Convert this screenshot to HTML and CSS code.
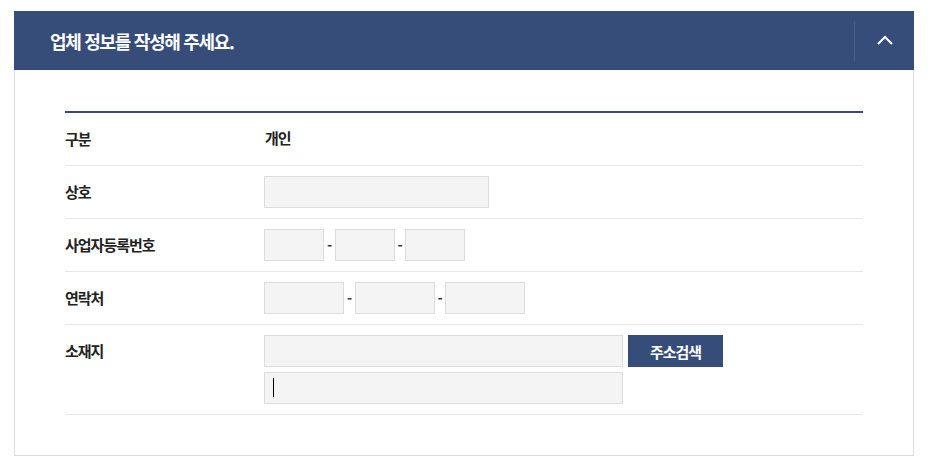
FILE: index.html
```html
<!DOCTYPE html>
<html lang="ko">
<head>
<meta charset="utf-8">
<title>업체 정보</title>
<link rel="stylesheet" href="styles.css">
</head>
<body>
<section class="panel">
  <header class="panel-head">
    <h2 class="panel-title">업체 정보를 작성해 주세요.</h2>
    <button class="toggle" type="button" aria-label="접기">
      <svg width="16" height="10" viewBox="0 0 16 10"><path d="M1 9 L8 2 L15 9" fill="none" stroke="#fff" stroke-width="2"/></svg>
    </button>
  </header>
  <div class="panel-body">
    <div class="form-table">
      <div class="row">
        <div class="label">구분</div>
        <div class="field"><span class="value">개인</span></div>
      </div>
      <div class="row">
        <div class="label">상호</div>
        <div class="field"><input class="inp w225" type="text"></div>
      </div>
      <div class="row">
        <div class="label">사업자등록번호</div>
        <div class="field">
          <input class="inp w60" type="text"><span class="dash">-</span><input class="inp w60" type="text"><span class="dash d10">-</span><input class="inp w60" type="text">
        </div>
      </div>
      <div class="row">
        <div class="label">연락처</div>
        <div class="field">
          <input class="inp w80" type="text"><span class="dash">-</span><input class="inp w80" type="text"><span class="dash d10">-</span><input class="inp w80" type="text">
        </div>
      </div>
      <div class="row">
        <div class="label">소재지</div>
        <div class="field col">
          <div class="line">
            <input class="inp w359" type="text">
            <button class="btn" type="button">주소검색</button>
          </div>
          <div class="line">
            <span class="caret-wrap"><input class="inp w359" type="text"></span>
          </div>
        </div>
      </div>
    </div>
  </div>
</section>
</body>
</html>
```
FILE: styles.css
```css
* { box-sizing: border-box; }
html, body { margin: 0; padding: 0; background: #fff; }
body {
  font-family: "Noto Sans CJK KR", "Noto Sans", sans-serif;
  color: #222;
}
.panel {
  width: 900px;
  margin: 11px 0 0 14px;
  border: 1px solid #dcdcdc;
  border-top: 0;
}
.panel-head {
  height: 59px;
  margin: 0 -1px;
  background: #354d78;
  display: flex;
  align-items: center;
  justify-content: space-between;
}
.panel-title {
  margin: 0 0 0 36px;
  font-size: 18px;
  font-weight: 700;
  letter-spacing: -1.3px;
  color: #fff;
  line-height: 1;
}
.toggle {
  width: 60px;
  height: 40px;
  border: 0;
  border-left: 1px solid #465d86;
  background: transparent;
  padding: 0;
  display: flex;
  align-items: center;
  justify-content: center;
  cursor: pointer;
}
.toggle svg { display: block; margin-top: -2px; }
.panel-body {
  padding: 41px 50px 40px 50px;
}
.form-table {
  border-top: 2px solid #354d78;
}
.row {
  display: flex;
  border-bottom: 1px solid #e8e8e8;
  padding: 10px 0;
}
.label {
  width: 199px;
  flex: none;
  font-size: 15px;
  font-weight: 700;
  letter-spacing: -1px;
  line-height: 32px;
  color: #222;
}
.field {
  display: flex;
  align-items: center;
  min-height: 32px;
}
.field.col {
  flex-direction: column;
  align-items: flex-start;
  gap: 5px;
}
.line { display: flex; gap: 5px; }
.value {
  font-size: 15px;
  font-weight: 700;
  letter-spacing: -1px;
  line-height: 32px;
  margin-top: -3px;
  margin-left: 1px;
}
.inp {
  height: 32px;
  border: 1px solid #dcdcdc;
  background: #f4f4f4;
  padding: 0 8px;
  font: inherit;
  font-size: 14px;
  outline: none;
  display: block;
}
.w225 { width: 225px; }
.w60 { width: 60px; }
.w80 { width: 80px; }
.w359 { width: 359px; }
.dash {
  width: 11px;
  text-align: center;
  font-size: 14px;
  font-weight: 700;
  color: #333;
  line-height: 32px;
}
.dash.d10 { width: 10px; }
.btn {
  width: 95px;
  height: 32px;
  border: 0;
  background: #354d78;
  color: #fff;
  font-family: inherit;
  font-size: 15px;
  font-weight: 700;
  letter-spacing: -1px;
  padding: 0;
  cursor: pointer;
}
.caret-wrap { position: relative; display: block; }
.caret-wrap::after {
  content: "";
  position: absolute;
  left: 9px;
  top: 6px;
  width: 1px;
  height: 19px;
  background: #000;
}
```
